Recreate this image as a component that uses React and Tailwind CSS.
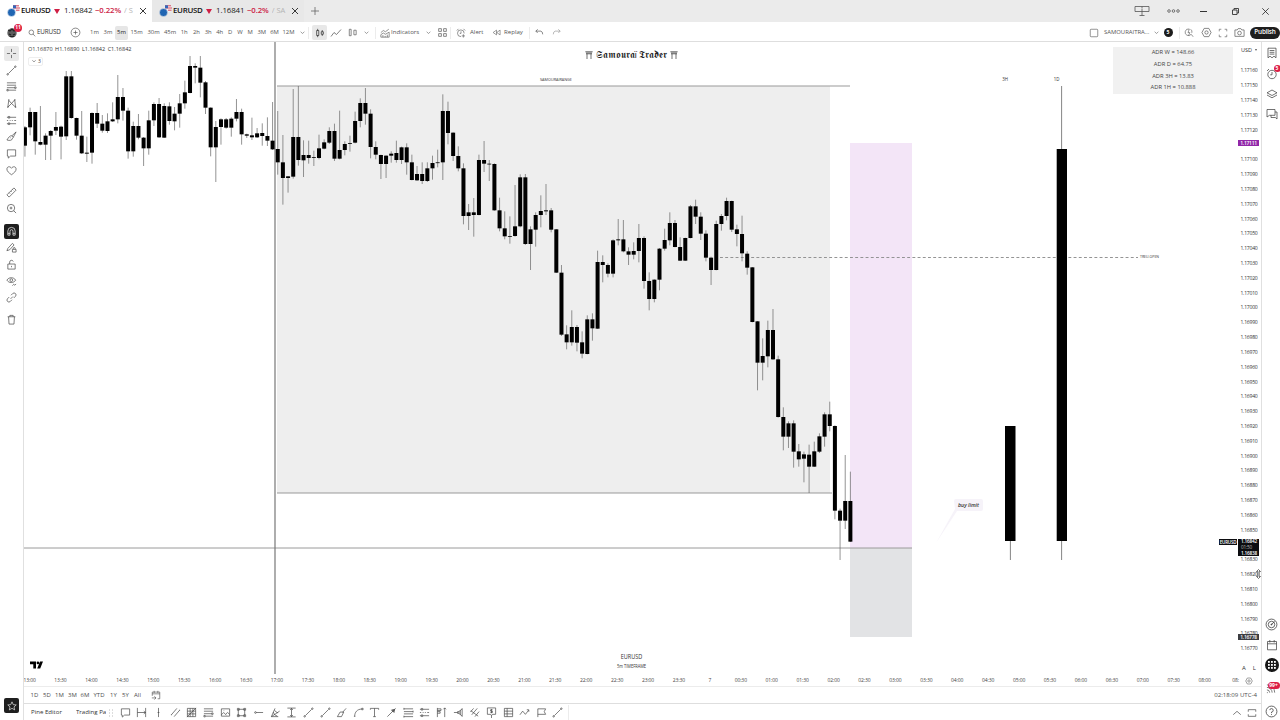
import React from 'react';
import clsx from 'clsx';

const STEP = 5.159;
const FIRST_X = 30.1;

// each bar: [body top, body bottom, high, low], in thirds of a pixel under the group's base
const groups = [
  {
    from: -1,
    base: 40,
    bars: [
      [262, 317, 258, 350], [216, 262, 203, 286], [216, 304, 216, 344], [306, 314, 198, 316], [287, 314, 280, 360],
      [273, 287, 270, 360], [261, 272, 216, 285], [260, 290, 257, 358], [109, 289, 93, 300], [109, 234, 93, 236],
      [234, 287, 233, 299], [287, 340, 213, 342], [338, 341, 290, 366], [219, 338, 217, 371], [219, 251, 189, 264],
      [251, 272, 225, 278], [244, 273, 220, 279], [238, 244, 187, 246], [171, 238, 105, 250], [171, 212, 144, 242],
      [212, 334, 203, 356], [258, 334, 245, 350], [258, 293, 222, 298], [293, 325, 291, 378], [241, 325, 212, 344],
      [192, 241, 187, 258], [192, 292, 174, 294], [198, 293, 190, 294], [199, 243, 187, 254], [221, 244, 201, 271],
      [190, 221, 162, 263], [157, 190, 122, 206], [78, 159, 48, 160], [78, 83, 70, 130], [83, 128, 48, 172],
      [127, 203, 123, 222], [203, 322, 202, 349], [261, 322, 243, 426], [238, 261, 235, 314], [238, 263, 234, 266],
      [236, 263, 232, 290], [216, 236, 177, 244], [216, 283, 206, 314], [283, 287, 281, 294], [286, 292, 233, 300],
      [280, 292, 264, 294],
    ],
  },
  {
    from: 45,
    base: 80,
    bars: [
      [159, 168, 130, 197], [168, 182, 112, 198], [182, 208, 66, 210], [207, 247, 93, 284], [247, 294, 165, 374],
      [289, 294, 288, 338], [171, 290, 27, 296], [171, 240, 18, 257], [225, 241, 181, 291], [225, 234, 182, 251],
      [231, 233, 212, 258], [205, 234, 164, 238], [187, 206, 178, 208], [153, 188, 142, 192], [153, 236, 131, 243],
      [210, 236, 92, 238], [192, 210, 184, 226], [189, 191, 167, 215], [123, 188, 95, 190], [69, 123, 55, 142],
      [69, 101, 24, 134], [101, 201, 88, 235], [201, 224, 184, 238], [225, 252, 224, 297], [227, 252, 226, 294],
      [221, 227, 214, 248], [219, 240, 182, 248], [202, 240, 200, 252], [202, 247, 190, 284], [247, 300, 224, 301],
      [282, 301, 258, 303], [282, 303, 247, 312], [265, 303, 247, 306], [249, 265, 227, 299], [247, 249, 209, 262],
      [93, 247, 43, 300], [93, 159, 65, 193], [158, 228, 157, 243], [228, 265, 199, 274], [265, 408, 250, 433],
      [397, 408, 372, 450], [397, 405, 354, 470], [240, 405, 224, 406], [240, 251, 183, 276], [251, 253, 240, 303],
      [252, 391, 250, 392],
    ],
  },
  {
    from: 91,
    base: 90,
    bars: [
      [361, 415, 323, 424], [415, 439, 364, 448], [438, 440, 379, 461], [409, 438, 285, 440], [262, 409, 253, 412],
      [262, 462, 252, 465], [418, 462, 409, 540], [375, 419, 367, 470], [363, 375, 316, 412], [361, 364, 282, 375],
      [361, 419, 354, 427], [418, 548, 417, 549], [548, 734, 525, 738], [733, 757, 706, 778], [711, 757, 661, 767],
      [711, 758, 705, 784], [757, 791, 724, 805], [688, 792, 676, 793], [688, 715, 670, 752], [516, 716, 482, 717],
      [516, 525, 496, 577], [525, 551, 520, 562], [451, 551, 448, 562], [448, 451, 387, 466], [448, 484, 390, 487],
      [484, 494, 472, 525], [483, 494, 457, 508], [444, 483, 402, 517],
    ],
  },
  {
    from: 119,
    base: 180,
    bars: [
      [174, 303, 169, 326], [303, 357, 277, 391], [299, 357, 298, 367], [206, 299, 204, 331], [180, 206, 146, 212],
      [129, 181, 97, 196], [129, 201, 120, 202], [201, 242, 172, 243], [174, 242, 173, 243], [79, 174, 75, 175],
      [79, 110, 59, 132], [110, 161, 97, 180], [161, 233, 151, 244], [233, 270, 230, 315], [132, 270, 122, 271],
      [108, 132, 102, 152], [63, 108, 53, 121], [63, 149, 62, 156], [148, 162, 134, 199], [162, 220, 107, 244],
      [221, 263, 214, 284], [262, 426, 261, 427], [424, 548, 423, 631], [528, 548, 475, 601], [450, 529, 422, 562],
      [450, 538, 387, 540], [538, 711, 527, 713], [711, 770, 682, 811], [730, 770, 724, 804], [730, 815, 721, 863],
      [814, 838, 792, 860], [823, 836, 815, 907], [824, 860, 794, 939], [814, 860, 785, 861], [769, 815, 760, 819],
      [703, 770, 697, 800], [703, 738, 665, 754], [738, 992, 736, 1018], [992, 1022, 986, 1140], [963, 1022, 825, 1047],
      [963, 1085, 875, 1086],
    ],
  },
];

const candles = groups.flatMap((g) =>
  g.bars.map(([top, bottom, high, low], i) => ({
    x: FIRST_X + (g.from + i) * STEP,
    top: g.base + top / 3,
    bottom: g.base + bottom / 3,
    high: g.base + high / 3,
    low: g.base + low / 3,
  }))
);

// icons on a 12x12 grid
const icons = {
  cross: 'M6 1v3.4M6 7.6V11M1 6h3.4M7.6 6H11',
  trend: 'M2.6 9.4 9.4 2.6M1 10.2a.8.8 0 1 0 1.6 0a.8.8 0 1 0-1.6 0M9.4 1.8a.8.8 0 1 0 1.6 0a.8.8 0 1 0-1.6 0',
  fib: 'M1 2h10M1 4.6h10M1 7.3h8M3 10h8M1 9.2v1.6h1.5V9.2zM9.4 6.5V8H11V6.5z',
  pattern: 'M2 10 3 2.5 6 6l3.5-4L10.5 10 6 6zM1.2 10h1.6M9.6 10h1.6M2.2 2h1.6M8.8 2h1.6',
  forecast: 'M1 2.5h1.5M4 2.5h7M1 6h1.4M4 6h1M6.4 6h1M9 6h2M1 9.5h1.5M4 9.5h7M2.5 1.6v1.8H4V1.6zM2.5 8.6v1.8H4V8.6z',
  brush: 'M11 1 6.5 5.2M11 1 8 6.8M6.5 5.2C4 4.8 3 7 1 9.8c3 1 5.8.4 6.2-1.8L8 6.8zM4.8 7.3l.8.7',
  comment: 'M1.5 2h9v6.8H5L2.5 11V8.8H1.5z',
  heart: 'M6 10.6C3 8.5 1 6.8 1 4.4 1 1.5 4.5 1 6 3.6 7.5 1 11 1.5 11 4.4 11 6.8 9 8.5 6 10.6z',
  ruler: 'M1 8.6 8.6 1 11 3.4 3.4 11zM3.4 6.2l1 1M5.2 4.4l1 1M7 2.6l1 1',
  zoomin: 'M1.5 5.5a4 4 0 1 0 8 0a4 4 0 1 0-8 0M8.5 8.5 11 11M5.5 4v3M4 5.5h3',
  magnet: 'M2 10V5.500a4 4 0 0 1 8 0V10H7.600V5.600a1.600 1.600 0 0 0-3.200 0V10zM2 8h2.400M7.600 8H10',
  lockdraw: 'M1 9.5 2 7 7 1.5 8.8 3.2 4 8.5zM7 8h4v3H7zM8 8V7a1 1 0 0 1 2 0v1',
  unlock: 'M2 5.5h8V11H2zM4 5.5V3.3a2 2 0 0 1 3.9-.5M6 7.5v1.5',
  eye: 'M1 4.5C3 1 8.5 1 10.5 4.5 8.5 8 3 8 1 4.5zM4.3 4.5a1.5 1.5 0 1 0 3 0a1.5 1.5 0 1 0-3 0M7 10.5l1.5-1.5 1 1L11 8.8',
  link: 'M5 7.5 7.5 5M5.5 3.5 7.3 1.7a2.1 2.1 0 0 1 3 3L8.5 6.5M6.5 8.5 4.7 10.3a2.1 2.1 0 0 1-3-3L3.5 5.5',
  trash: 'M1.8 3h8.4M4.2 3V1.5h3.6V3M2.8 3l.5 8h5.4l.5-8',
  star: 'M6 1l1.5 3.4 3.6.3-2.7 2.4.8 3.6L6 8.8l-3.2 1.9.8-3.6L.9 4.7l3.6-.3z',
  search: 'M1.5 5a3.5 3.5 0 1 0 7 0a3.5 3.5 0 1 0-7 0M7.5 7.5 10.8 11',
  plusCircle: 'M1.2 6a4.8 4.8 0 1 0 9.6 0a4.8 4.8 0 1 0-9.6 0M6 3.8v4.4M3.8 6h4.4',
  chevron: 'M3.5 5 6 7.3 8.5 5',
  candles: 'M2 3h2.5v6H2zM3.2 1v2M3.2 9v2M7.500 4.500H10v3H7.500zM8.700 2.500v2M8.700 7.500v2',
  line: 'M1 9.5 4 5.5l2.5 2L11 2.5',
  hollow: 'M2.5 2.5h2v7h-2zM7.5 3.5h2.5v5H7.5z',
  indicators: 'M1 11V8l3-2 2.5 1.5L11 5v6zM1 5.5 4 3l2.5 1.5L10.5 1.5M3.5 11V8.5M6.2 11V9.5M8.8 11V8',
  grid4: 'M1.8 1.8h3v3h-3zM7.2 1.8h3v3h-3zM1.8 7.2h3v3h-3zM7.2 7.2h3v3h-3z',
  alert: 'M9.8 6.5A4 4 0 1 0 6 10.3M6 4v2.500H4.500M1 3 3 1M9 1l2 2M8.800 7.500v4M6.800 9.500h4',
  replay: 'M6 2.8v6.4L1.5 6zM10.8 2.8v6.4L6.3 6z',
  undo: 'M4 2.5 2 4.5l2 2M2 4.5h5.5Q9.5 5 9.5 8',
  redo: 'M8 2.5l2 2-2 2M10 4.5H4.5Q2.5 5 2.5 8',
  square: 'M2.5 1.5h7a1 1 0 0 1 1 1v7a1 1 0 0 1-1 1h-7a1 1 0 0 1-1-1v-7a1 1 0 0 1 1-1z',
  quick: 'M6 1.2A4 4 0 1 0 8.6 7.5L11 10.5M6.5 1 4.8 5.5H7L5.5 9M8 1.5a4 4 0 0 1 1.4 4.3',
  hex: 'M3.5 1.5h5L11 6l-2.5 4.5h-5L1 6zM4.2 6a1.8 1.8 0 1 0 3.6 0a1.8 1.8 0 1 0-3.6 0',
  full: 'M1.5 4V1.5H4M8 1.5h2.5V4M10.5 8v2.5H8M4 10.5H1.5V8',
  camera: 'M1 3.2h2.5L4.5 1.8h3l1 1.4H11v7H1zM4 6.6a2 2 0 1 0 4 0a2 2 0 1 0-4 0',
  notes: 'M2 1.2h8v9.6L8 9.2 6 10.8 4 9.2 2 10.8zM3.6 3.5h4.8M3.6 5.3h4.8M3.6 7.1h4.8',
  clock: 'M1.8 6.5a4.2 4.2 0 1 0 8.4 0a4.2 4.2 0 1 0-8.4 0M6 4v2.8H4.2M1 3 3 1M9 1l2 2',
  layers: 'M6 2l5 2.8L6 7.5 1 4.8zM1 7l5 2.8L11 7',
  chat: 'M1 1.5h8v5.8H3.5L1 9zM9 4h2v7L9.3 9.5H5V7.3',
  target: 'M1 6a5 5 0 1 0 10 0a5 5 0 1 0-10 0M3 6a3 3 0 1 0 6 0a3 3 0 1 0-6 0M5.5 6.5 8.8 3.2M5.5 6a.5.5 0 1 0 1 0a.5.5 0 1 0-1 0',
  calendar: 'M1.5 2.5h9v8.3h-9zM1.5 4.8h9M3.8 1v2.5M8.2 1v2.5',
  stream: 'M1 10.5h1M1 7.5a3 3 0 0 1 3 3M1 4.8a5.7 5.7 0 0 1 5.7 5.7M1 2a8.5 8.5 0 0 1 8.5 8.5',
  help: 'M1 6a5 5 0 1 0 10 0a5 5 0 1 0-10 0M4.4 4.7A1.6 1.6 0 1 1 6 6.5v1M6 8.4v.8',
  goto: 'M8 10.5h2.5v-8h-9V7M1.5 4.6h9M3.8 1v2.5M8.2 1v2.5M1 9.5h5M4 7.5l2 2-2 2',
  dateRange: 'M1.5 1v10M10.5 1v10M1.5 6h9M8.5 4.5 10.2 6 8.5 7.5',
  vline: 'M6 1v10M5 6h2',
  parallel: 'M1.5 8.5 7.5 1.5M4.5 10.5 10.5 3.5M1 8.5h1M10 3.5h1',
  gann: 'M1.5 1.5h9v9h-9zM4.5 1.5v9M7.5 1.5v9M1.5 4.5h9M1.5 7.5h9M1 11 11 1',
  image: 'M1.5 2h9v8h-9zM1.5 8.5 4 6l3 3M6.5 7.5 8.3 6l2.2 2M4 4h.6',
  rect: 'M2.5 2.5h7v7h-7zM1.5 1.5h2v2h-2zM8.5 1.5h2v2h-2zM1.5 8.5h2v2h-2zM8.5 8.5h2v2h-2z',
  hray: 'M3.5 6H11M1.8 6a.9.9 0 1 0 1.8 0a.9.9 0 1 0-1.8 0',
  fan: 'M1.5 10.5 5.5 1.5M1.5 10.5 10.5 4.5M1.5 10.5H9M3.5 5.5a6 6 0 0 0 4.5 4.5M5 3.5a6 6 0 0 0 3.8 3',
  priceRange: 'M1.5 1.2h9M1.5 10.8h9M6 1.5v9M4.5 3.2 6 1.5l1.5 1.7M4.5 8.8 6 10.5l1.5-1.7',
  path: 'M1.5 10.5 4.5 5.5h4L6 10.5zM7 6l4-4.5',
  curve: 'M1.8 10C2 5.5 4.5 2.5 9.5 2.2M1 10.2h1.6M9.5 1.4V3H11V1.4z',
  text: 'M1.5 3V1.5h9V3M6 1.5v9M4.5 10.5h3',
  arrow: 'M1.5 10.5 10.5 1.5M9.5 2.500 8.800 6 6 3.200zM9 3.200 8 5.300 6.700 4z',
  longPos: 'M1 2h10M1 5h10M1 7.5h10M1 10.5h10M1 1v2M11 4v2M1 9.5v2',
  profile: 'M1.5 1v10M1.5 2h4v1.8h-4M1.5 5h3v1.8h-3M9.5 1v10M8 2.5 9.5 1 11 2.5',
  volume: 'M1 6h4M5 5v2h1.500V5zM8 3.500v5M10 1.500v9M6.500 5l3.500-3M6.500 7l3.500 3',
  pitch: 'M1.5 5.5 5 1.5M3 8.5l6-7M6.5 10.5 11 5M2 4l8 6',
  priceNote: 'M1.5 1h9v7H7L6 9.5 5 8H1.5zM6 9.5V12M7.2 3H5v1.5h2V6H4.8M6 2.3v4.5',
  table: 'M1.5 1.5h9v9h-9zM1.5 4.5h9M1.5 7.5h9M4.5 1.5v9',
  zig: 'M1 8.5 4 4.5l3 3.5 3.5-4.5M8.5 3h2.2v2.2',
  flag: 'M2 11V2h8.5L9 5l1.5 3H2',
  up: 'M1.5 8 6 4l4.5 4',
  restore: 'M1.5 4.5V2h9v2.5M1.5 7.5V10h9V7.5',
};

function Icon({ name, className = 'size-3' }) {
  return (
    <svg viewBox="0 0 12 12" className={clsx('shrink-0', className)} fill="none" stroke="currentColor" strokeWidth="0.75">
      <path d={icons[name]} />
    </svg>
  );
}

function Cell({ w, children, className }) {
  return <div className={clsx('flex shrink-0 items-center justify-center', w, className)}>{children}</div>;
}

function Sep() {
  return <div className="h-3 w-px shrink-0 bg-[#ececec]" />;
}

function Tab({ price, change, extra, active }) {
  return (
    <div className={clsx('flex h-full w-[152px] items-center pl-[7px]', active ? 'bg-white' : 'bg-[#e8e8e8]')}>
      <svg viewBox="0 0 14 12" className="h-3 w-3.5 shrink-0">
        <circle cx="9" cy="3.6" r="3.5" fill="#f4f5f8" />
        <path d="M6 .8h6M6 3h7M9 5.2h3.5" stroke="#d8475c" strokeWidth="1" />
        <path d="M6 .3h3v3H6z" fill="#3466b8" />
        <circle cx="4.5" cy="7.5" r="4" fill="#2065b2" stroke={active ? '#fff' : '#e8e8e8'} strokeWidth=".5" />
      </svg>
      <span className="w-[31px] text-[7.9px] font-semibold tracking-[-0.3px] text-[#111]">EURUSD</span>
      <svg viewBox="0 0 6 5" className="ml-[2px] h-[5px] w-1.5"><path d="M0 0h6L3 5z" fill="#cf1f45" /></svg>
      <span className="ml-[4px] w-[31px] text-[7.9px] tracking-[-0.1px] text-[#222]">{price}</span>
      <span className="text-[7.8px] font-semibold tracking-[-0.1px] text-[#cc2447]">{change}</span>
      <span className="ml-[3px] flex-1 overflow-hidden text-[7.5px] whitespace-nowrap text-[#b5b5b5]">/ {extra}</span>
      <Cell w="w-[18px]">
        <svg viewBox="0 0 6 6" className="size-1.5" stroke="#222" strokeWidth=".9"><path d="M0 0l6 6M6 0 0 6" /></svg>
      </Cell>
    </div>
  );
}

function TitleBar() {
  return (
    <div className="flex h-[22px] shrink-0 items-center bg-[#ebebeb]">
      <Tab price="1.16842" change="−0.22%" extra="S" active />
      <Tab price="1.16841" change="−0.2%" extra="SA" />
      <Cell w="w-[22px]">
        <svg viewBox="0 0 8 8" className="size-2" stroke="#666" strokeWidth=".8"><path d="M4 0v8M0 4h8" /></svg>
      </Cell>
      <div className="flex-1" />
      <Cell w="w-8" className="pl-[3px] text-[#555]">
        <svg viewBox="0 0 16 12" className="h-3 w-4" fill="none" stroke="currentColor" strokeWidth=".8">
          <path d="M1 1.5h14v5H1zM8 4v6.5M5.5 10.5h5M8 1.5v2" />
        </svg>
      </Cell>
      <Cell w="w-8" className="pl-[3px] text-[#555]">
        <svg viewBox="0 0 13 4" className="h-1 w-[13px]" fill="none" stroke="currentColor" strokeWidth=".8">
          <circle cx="2" cy="2" r="1.3" /><circle cx="6.5" cy="2" r="1.3" /><circle cx="11" cy="2" r="1.3" />
        </svg>
      </Cell>
      <Cell w="w-[31px]"><div className="h-px w-[7px] bg-[#333]" /></Cell>
      <Cell w="w-8">
        <svg viewBox="0 0 7 7" className="size-[7px]" fill="none" stroke="#333" strokeWidth=".9"><path d="M.5 2h4.5v4.5H.5zM2 2V.5h4.5V5H5" /></svg>
      </Cell>
      <Cell w="w-[29px]">
        <svg viewBox="0 0 7 7" className="size-[7px]" stroke="#222" strokeWidth=".8"><path d="M.3.3l6.400 6.400M6.700.3.3 6.700" /></svg>
      </Cell>
    </div>
  );
}

const intervals = [
  ['1m', 'w-[13px]'], ['3m', 'w-[14px]'], ['5m', 'w-[13px]'], ['15m', 'w-[17px]'], ['30m', 'w-[17px]'],
  ['45m', 'w-4'], ['1h', 'w-[12.5px]'], ['2h', 'w-3'], ['3h', 'w-[11.5px]'], ['4h', 'w-[11.5px]'],
  ['D', 'w-[9.5px]'], ['W', 'w-2.5'], ['M', 'w-[10.5px]'], ['3M', 'w-[12.5px]'], ['6M', 'w-[13px]'], ['12M', 'w-[15px]'],
];

function Toolbar() {
  return (
    <div className="flex h-5 shrink-0 items-center border-b border-[#dedede] pt-[2px] text-[5.9px] text-[#555]">
      <Cell w="w-6">
        <div className="relative">
          <svg viewBox="0 0 10 10" className="size-2.5">
            <circle cx="5" cy="5" r="4.7" fill="#5c5c5c" />
            <path d="M1 2l2 1 2-2 2 2 2-1M2 6l2 1M6 7l2-1M3 8.5h4" stroke="#222" strokeWidth="1.2" fill="none" />
          </svg>
          <span className="absolute -top-[4px] left-[7px] flex size-2 items-center justify-center rounded-full bg-[#dc1f45] text-[5px] font-bold text-white">11</span>
        </div>
      </Cell>
      <Cell w="w-[13px]" className="pl-0.5"><Icon name="search" className="size-[8px] text-[#222]" /></Cell>
      <span className="w-[29px] text-[6.3px] font-medium tracking-[-0.15px] text-[#333]">EURUSD</span>
      <Cell w="w-[18px]"><Icon name="plusCircle" className="size-[11px]" /></Cell>
      <div className="w-[4px]" />
      {intervals.map(([label, w]) => (
        <Cell key={label} w={w} className={label === '5m' ? 'h-[14px] rounded-xs bg-[#e6e6e6] text-[#222]' : ''}>
          {label}
        </Cell>
      ))}
      <Cell w="w-3"><Icon name="chevron" className="size-[9px]" /></Cell>
      <Sep />
      <Cell w="w-[15px]" className="ml-[3px] h-[15px] rounded-xs bg-[#e8e8e8]"><Icon name="candles" className="size-2.5 text-[#111]" /></Cell>
      <Cell w="w-[17px]"><Icon name="line" /></Cell>
      <Cell w="w-4"><Icon name="hollow" className="size-[11px]" /></Cell>
      <Cell w="w-3"><Icon name="chevron" className="size-[9px]" /></Cell>
      <div className="w-[3px]" />
      <Sep />
      <Cell w="w-[15px]" className="pl-[3px]"><Icon name="indicators" className="size-2.5" /></Cell>
      <span className="w-[31px] text-[6.1px]">Indicators</span>
      <Cell w="w-3"><Icon name="chevron" className="size-[9px]" /></Cell>
      <Cell w="w-[16px]"><Icon name="grid4" className="size-[11px]" /></Cell>
      <Sep />
      <Cell w="w-[19px]"><Icon name="alert" className="size-2.5" /></Cell>
      <span className="w-[18px] text-[6.1px]">Alert</span>
      <Cell w="w-4"><Icon name="replay" className="size-[9px]" /></Cell>
      <span className="w-[25px] text-[6.1px]">Replay</span>
      <Sep />
      <Cell w="w-[18px]"><Icon name="undo" className="size-[11px]" /></Cell>
      <Cell w="w-4" className="text-[#999]"><Icon name="redo" className="size-[11px]" /></Cell>
      <div className="flex-1" />
      <Cell w="w-5"><Icon name="square" className="size-2.5" /></Cell>
      <span className="w-[46px] text-[5.9px]">SAMOURAITRA...</span>
      <Cell w="w-3"><Icon name="chevron" className="size-[9px]" /></Cell>
      <Cell w="w-3"><div className="flex size-[9px] items-center justify-center rounded-full bg-[#1c1c1c] text-[5px] font-bold text-white">5</div></Cell>
      <div className="w-[5px]" />
      <Sep />
      <Cell w="w-[18px]"><Icon name="quick" className="size-2.5" /></Cell>
      <Cell w="w-4"><Icon name="hex" className="size-[11px]" /></Cell>
      <Cell w="w-[17px]"><Icon name="full" className="size-2.5" /></Cell>
      <Cell w="w-4"><Icon name="camera" className="size-[11px]" /></Cell>
      <button className="ml-[3px] h-3 w-[30px] shrink-0 rounded-full bg-[#1e1e1e] text-[6.4px] leading-none font-semibold tracking-[-0.2px] text-white">Publish</button>
    </div>
  );
}

function LeftBar() {
  const sets = [
    ['cross', 'trend', 'fib', 'pattern', 'forecast', 'brush', 'comment', 'heart'],
    ['ruler', 'zoomin'],
    ['magnet', 'lockdraw', 'unlock', 'eye', 'link'],
    ['trash'],
  ];
  return (
    <div className="flex w-6 shrink-0 flex-col items-center border-r border-[#e0e0e0] pt-[3px]">
      <div className="flex flex-col gap-[5.4px]">
        {sets.map((set) => (
          <div key={set[0]}>
            {set.map((name) => (
              <div key={name} className="flex h-[16.7px] items-center justify-center">
                <div
                  className={clsx(
                    'flex size-[15px] items-center justify-center rounded-xs text-[#444]',
                    name === 'cross' && 'bg-[#e9e9e9]',
                    name === 'magnet' && 'bg-[#1f1f1f] text-white'
                  )}
                >
                  <Icon name={name} className="size-[11px]" />
                </div>
              </div>
            ))}
          </div>
        ))}
      </div>
      <div className="mt-auto mb-[7px] flex size-[15px] items-center justify-center rounded-xs bg-[#1f1f1f] text-white">
        <Icon name="star" className="size-2.5" />
      </div>
    </div>
  );
}

function RightBar() {
  return (
    <div className="flex w-[19px] shrink-0 flex-col items-center border-l border-[#e0e0e0] pr-px pl-[2px] text-[#444]">
      <Cell w="w-4" className="h-[22px]"><Icon name="notes" /></Cell>
      <Cell w="w-4" className="relative h-[19px]">
        <Icon name="clock" />
        <span className="absolute top-px -right-px flex size-[7px] items-center justify-center rounded-full bg-[#dc1f45] text-[5px] font-bold text-white">5</span>
      </Cell>
      <Cell w="w-4" className="h-[21px]"><Icon name="layers" /></Cell>
      <Cell w="w-4" className="h-5"><Icon name="chat" /></Cell>
      <div className="flex-1" />
      <Cell w="w-4" className="h-[21px]"><Icon name="target" className="size-[13px]" /></Cell>
      <Cell w="w-4" className="h-5"><Icon name="calendar" /></Cell>
      <Cell w="w-4" className="h-5">
        <div className="flex size-[14px] items-center justify-center rounded-full bg-[#161616]">
          <svg viewBox="0 0 8 8" className="size-2" fill="#fff">
            {[0, 3, 6].map((y) => [0, 3, 6].map((x) => <rect key={`${x}-${y}`} x={x} y={y} width="1.8" height="1.8" />))}
          </svg>
        </div>
      </Cell>
      <Cell w="w-4" className="relative h-[27px]">
        <Icon name="stream" className="size-[11px]" />
        <span className="absolute top-[7px] right-0 flex h-[7px] w-3 items-center justify-center rounded-full bg-[#dc1f45] text-[5px] font-bold text-white">99+</span>
      </Cell>
      <Cell w="w-4" className="h-[18px]"><Icon name="help" className="size-[13px]" /></Cell>
    </div>
  );
}

// drawn in window coordinates, the viewBox starts at the plot's own corner
function Plot() {
  return (
    <svg viewBox="24 42 1213 632" className="block h-[632px] w-[1213px]">
      <rect x="277" y="86" width="553" height="407" fill="#eeeeee" />
      <rect x="850" y="143" width="62" height="405" fill="#f3e5f7" />
      <rect x="850" y="548" width="62" height="89" fill="#e2e3e5" />
      <path d="M277 86h573M277 493h555" stroke="#999" strokeWidth="1" />
      <path d="M24 548h888" stroke="#9a9a9a" strokeWidth="1" />
      <path d="M720 257.5h418" stroke="#888" strokeWidth=".9" strokeDasharray="2.9 2.3" />
      <path d="M275 42v632" stroke="#777" strokeWidth="1.2" />
      {candles.map((c) => (
        <g key={c.x}>
          <path d={`M${c.x} ${c.high}V${c.low}`} stroke="#666" strokeWidth=".7" />
          <rect x={c.x - 2} y={c.top} width="4" height={Math.max(c.bottom - c.top, 0.8)} fill="#000" />
        </g>
      ))}
      <path d="M1010.4 541v19M1061.6 86v474" stroke="#666" strokeWidth=".8" />
      <rect x="1005" y="426" width="10.5" height="115" fill="#000" />
      <rect x="1056.7" y="149" width="10.3" height="392" fill="#000" />
      <path d="M954 501q0-2 2-2h25q2 0 2 2v8q0 2-2 2h-24L936 543l19-34z" fill="#f6f3f9" />
      <g fill="#333" textAnchor="middle" className="font-['Open_Sans',sans-serif]">
        <text x="556" y="80.7" fontSize="4.3" textLength="32" lengthAdjust="spacingAndGlyphs">SAMOURAIRANGE</text>
        <text x="1005" y="80.7" fontSize="4.4">3H</text>
        <text x="1056.5" y="80.7" fontSize="4.4">1D</text>
        <text x="1149.5" y="258.4" fontSize="4" textLength="19" lengthAdjust="spacingAndGlyphs">TREU.OPEN</text>
        <text x="968.5" y="507" fontSize="5.6" fontWeight="600" fontStyle="italic" textLength="21" lengthAdjust="spacingAndGlyphs">buy limit</text>
        <text x="631.5" y="659.3" fontSize="6.4" textLength="21.5" lengthAdjust="spacingAndGlyphs">EURUSD</text>
        <text x="631.5" y="668" fontSize="4.7" textLength="29" lengthAdjust="spacingAndGlyphs">5m TIMEFRAME</text>
      </g>
      <path d="M30 661.5h6v7h-2.700v-4.200H30zM36.600 662.900a1.300 1.300 0 1 0 2.600 0a1.300 1.300 0 1 0-2.600 0M40 661.500h3l-2.800 7h-3z" fill="#000" />
    </svg>
  );
}

function Torii() {
  return (
    <svg viewBox="0 0 8 8" className="size-2 shrink-0" fill="none" stroke="#333" strokeWidth=".7">
      <path d="M.3.8h7.400M1 2.800h6M2 .8V8M6 .8V8M4 .8v2" />
    </svg>
  );
}

// rows whose price sits behind a tag stay blank
const tagged = ['1.17110', '1.16840'];

function PriceScale() {
  const prices = Array.from({ length: 40 }, (_, i) => (1.1716 - i * 0.0001).toFixed(5));
  return (
    <div className="relative w-6 shrink-0 text-[5.1px] text-[#333]">
      <div className="flex h-[17px] items-center gap-[3px] pl-[4px] text-[5.5px]">
        USD <span className="h-[3px] border-x-[1.5px] border-t-2 border-x-transparent border-t-[#555]" />
      </div>
      <div className="mt-[4.6px] flex flex-col">
        {prices.map((p) => (
          <div key={p} className="flex h-[14.815px] items-center justify-center tracking-[-0.25px]">
            {!tagged.includes(p) && p}
          </div>
        ))}
      </div>
      <div className="flex items-center justify-center gap-[7px] pt-[9px] text-[6px]"><span>A</span><span>L</span></div>
      <div className="absolute top-[98px] left-[1px] flex h-[6px] w-[21px] items-center justify-center bg-[#9127a8] text-[4.9px] font-semibold tracking-[-0.2px] text-white">1.17111</div>
      <div className="absolute top-[497px] left-[1px] flex w-[21px] flex-col bg-[#0c0c10] pl-[3px] text-[4.7px] leading-[5.8px] tracking-[-0.2px] text-white">
        <b className="font-semibold">1.16842</b>
        <span className="text-[#bbb]">01:50</span>
        <b className="font-semibold">1.16838</b>
      </div>
      <div className="absolute top-[497px] -left-[18px] flex h-[6px] w-[18px] items-center justify-center bg-[#0c0c10] text-[4.5px] font-semibold tracking-[-0.2px] text-white">EURUSD</div>
      <div className="absolute top-[592px] left-[1px] flex h-[6px] w-[21px] items-center justify-center bg-[#3c3d41] text-[4.9px] font-semibold tracking-[-0.2px] text-white">1.16778</div>
      <svg viewBox="0 0 5 10" className="absolute top-[527px] left-[19px] h-2.5 w-[5px]" fill="#fff" stroke="#333" strokeWidth=".7">
        <path d="M2.5.5 4.5 2.5H3.2v5h1.3L2.5 9.5.5 7.5h1.3v-5H.5z" />
      </svg>
    </div>
  );
}

const half = (m) => `${String(Math.floor(m / 60) % 24).padStart(2, '0')}:${m % 60 ? '30' : '00'}`;
const times = Array.from({ length: 40 }, (_, i) => {
  if (i === 22) return '7';
  if (i === 39) return '08:';
  return half(13 * 60 + i * 30);
});

function TimeScale() {
  return (
    <div className="flex h-3 shrink-0 items-center overflow-hidden pt-px text-[5px] text-[#444]">
      <div className="-ml-[9.9px] flex">
        {times.map((t, i) => (
          <span key={i} className="w-[30.93px] shrink-0 text-center tracking-[-0.1px]">{t}</span>
        ))}
      </div>
      <div className="-ml-[6px] shrink-0"><Icon name="hex" className="size-2" /></div>
    </div>
  );
}

const drawings = [
  'comment', 'dateRange', 'vline', 'parallel', 'gann', 'fib', 'image', 'rect', 'hray', 'fan', 'priceRange', 'trend',
  'trend', 'path', 'curve', 'text', 'arrow', 'longPos', 'forecast', 'profile', 'volume', 'pitch', 'priceNote',
  'table', 'zig', 'flag', 'trend',
];

const ranges = [
  ['1D', 'w-[13px]'], ['5D', 'w-3'], ['1M', 'w-[13px]'], ['3M', 'w-[13px]'], ['6M', 'w-3'],
  ['YTD', 'w-4'], ['1Y', 'w-[13px]'], ['5Y', 'w-[11px]'], ['All', 'w-[13px]'],
];

function App() {
  return (
    <div className="flex h-[720px] w-[1280px] flex-col overflow-hidden bg-white font-['Open_Sans','Noto_Sans',sans-serif] leading-none">
      <TitleBar />
      <Toolbar />
      <div className="flex min-h-0 flex-1">
        <LeftBar />
        <div className="flex w-[1237px] flex-col">
          <div className="flex h-[632px] shrink-0">
            <div className="relative w-[1213px] shrink-0">
              <Plot />
              <div className="absolute top-[5px] left-1 text-[5.5px] text-[#333]">
                <div className="flex gap-[2.5px]">
                  <span>O1.16870</span><span>H1.16890</span><span>L1.16842</span><span>C1.16842</span>
                </div>
                <div className="mt-[4px] flex h-[9px] w-[15px] items-center justify-center rounded-xs border border-[#eee] bg-white text-[5px]">
                  <Icon name="chevron" className="size-2" />3
                </div>
              </div>
              <div className="absolute top-[8px] left-[561px] flex items-center gap-[3px] text-[9.6px] whitespace-nowrap text-[#222]">
                <Torii />
                <span className="flex w-[71px] justify-center">𝕾𝖆𝖒𝖔𝖚𝖗𝖆ï 𝕿𝖗𝖆𝖉𝖊𝖗</span>
                <Torii />
              </div>
              <div className="absolute top-[5px] left-[1089px] flex w-[120px] flex-col bg-[#f1f1f1] text-center text-[5.8px] text-[#444]">
                {['ADR W = 148.66', 'ADR D = 64.75', 'ADR 3H = 13.83', 'ADR 1H = 10.888'].map((t) => (
                  <span key={t} className="h-[11.8px] leading-[11.5px]">{t}</span>
                ))}
              </div>
            </div>
            <PriceScale />
          </div>
          <TimeScale />
          <div className="flex h-[17px] shrink-0 items-center border-t border-[#ececec] pl-1 text-[6px] text-[#4c4c4c]">
            {ranges.map(([label, w]) => (
              <Cell key={label} w={w}>{label}</Cell>
            ))}
            <Cell w="w-6"><Icon name="goto" className="size-[10px]" /></Cell>
            <span className="ml-auto pr-[4px] text-[6.1px]">02:18:09 UTC-4</span>
          </div>
          <div className="flex h-[17px] shrink-0 items-center border-t border-[#dedede] pt-px pl-[7px] text-[6.1px] text-[#333]">
            <span className="w-[45px]">Pine Editor</span>
            <span className="w-[30px] overflow-hidden py-0.5 whitespace-nowrap">Trading Pan</span>
            <svg viewBox="0 0 4 8" className="ml-[3px] mr-[4px] h-2 w-1" fill="#bbb">
              {[1, 4, 7].map((y) => [0, 3].map((x) => <rect key={`${x}-${y}`} x={x} y={y - 0.5} width="1" height="1" />))}
            </svg>
            {drawings.map((name, i) => (
              <Cell key={i} w="w-[16.65px]" className="text-[#444]"><Icon name={name} className="size-[11px]" /></Cell>
            ))}
            <div className="ml-0.5 h-full w-px bg-[#ececec]" />
            <div className="ml-auto flex gap-[5px] pr-[4px]">
              <Icon name="up" className="size-[10px]" />
              <Icon name="restore" className="size-[10px]" />
            </div>
          </div>
        </div>
        <RightBar />
      </div>
    </div>
  );
}

export default App;
